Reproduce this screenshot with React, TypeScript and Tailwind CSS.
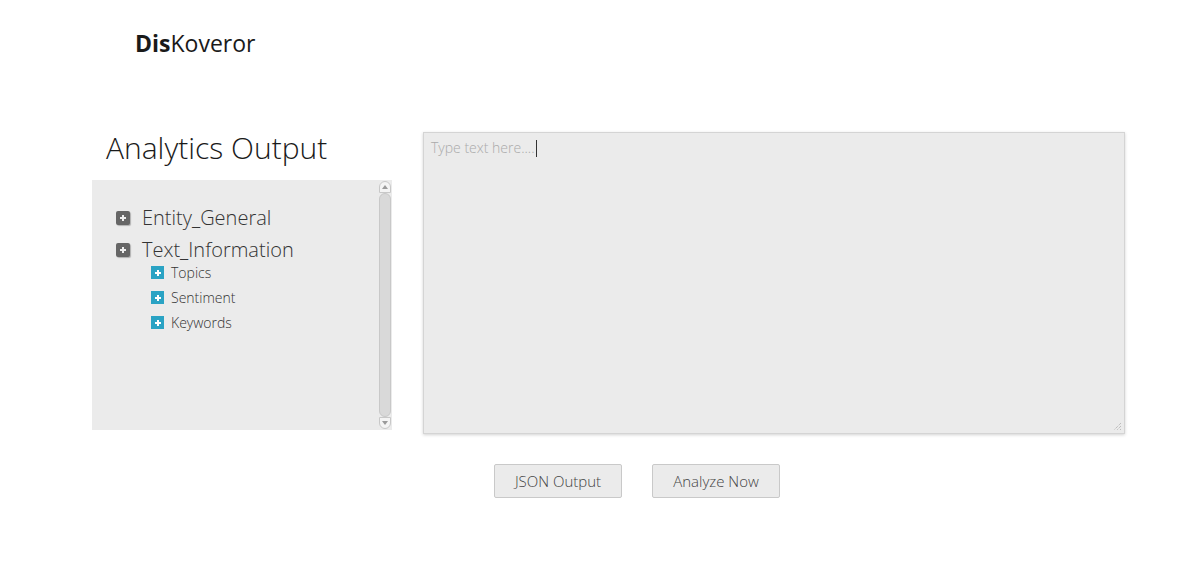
import React from 'react';

const font = { fontFamily: '"Open Sans", "Liberation Sans", sans-serif' };

function GrayPlus() {
  return (
    <span className="flex h-[14px] w-[14px] items-center justify-center rounded-[2px] bg-[#666] shadow-[1px_1px_1px_rgba(0,0,0,0.25)]">
      <svg width="8" height="8" viewBox="0 0 8 8">
        <path d="M4 1v6M1 4h6" stroke="#eee" strokeWidth="2" />
      </svg>
    </span>
  );
}

function TealPlus() {
  return (
    <span className="flex h-[13px] w-[13px] items-center justify-center bg-[#2aa3c4]">
      <svg width="8" height="8" viewBox="0 0 8 8">
        <path d="M4 1v6M1 4h6" stroke="#fff" strokeWidth="2" />
      </svg>
    </span>
  );
}

function Scrollbar() {
  return (
    <div className="mr-[1px] flex w-[13px] flex-col items-center py-[1px]">
      <div className="flex h-[12px] w-[12px] items-center justify-center rounded-t-full border border-[#c8c8c8] bg-[#f4f4f4]">
        <svg width="6" height="4" viewBox="0 0 6 4"><path d="M0 4L3 0L6 4Z" fill="#9a9a9a" /></svg>
      </div>
      <div className="w-[12px] flex-1 rounded-[6px] border border-[#c8c8c8] bg-[#d9d9d9]" />
      <div className="flex h-[12px] w-[12px] items-center justify-center rounded-b-full border border-[#c8c8c8] bg-[#f4f4f4]">
        <svg width="6" height="4" viewBox="0 0 6 4"><path d="M0 0L3 4L6 0Z" fill="#9a9a9a" /></svg>
      </div>
    </div>
  );
}

export default function App() {
  const children = ['Topics', 'Sentiment', 'Keywords'];
  return (
    <div className="min-h-[571px] w-[1190px] bg-white text-[#222]" style={font}>
      <header className="pl-[135px] pt-[29px]">
        <div className="text-[23px] leading-[28px] text-[#1a1a1a]">
          <span className="font-bold">Dis</span>
          <span className="font-normal">Koveror</span>
        </div>
      </header>

      <div className="mt-[75px] flex pl-[92px]">
        <div className="flex w-[300px] flex-col">
          <h1 className="pl-[14px] text-[30px] font-light leading-[32px] text-[#1a1a1a]">
            Analytics Output
          </h1>
          <div className="mt-[16px] flex h-[250px] bg-[#ebebeb]">
            <div className="flex-1 pl-[24px] pt-[25px]">
              <div className="flex h-[26px] items-center gap-[12px]">
                <GrayPlus />
                <span className="text-[20px] font-light text-[#333]">Entity_General</span>
              </div>
              <div className="mt-[6px] flex h-[26px] items-center gap-[12px]">
                <GrayPlus />
                <span className="text-[20px] font-light text-[#333]">Text_Information</span>
              </div>
              <div className="-mt-[3px] pl-[35px]">
                {children.map(c => (
                  <div key={c} className="flex h-[25px] items-center gap-[7px]">
                    <TealPlus />
                    <span className="text-[14px] font-light text-[#333]">{c}</span>
                  </div>
                ))}
              </div>
            </div>
            <Scrollbar />
          </div>
        </div>

        <div className="ml-[31px] flex flex-col items-start">
          <div className="flex h-[302px] w-[702px] flex-col border border-[#d4d4d4] bg-[#ebebeb] shadow-[0_1px_3px_rgba(0,0,0,0.18)]">
            <div className="flex-1 pl-[7px] pt-[2px]">
              <span className="text-[14px] font-light text-[#aaa]">Type text here....</span>
              <span className="ml-[1px] inline-block h-[17px] w-[1px] bg-[#333] align-middle" />
            </div>
            <div className="flex justify-end pb-[2px] pr-[2px]">
              <svg width="9" height="9" viewBox="0 0 9 9">
                <path d="M8 1L1 8M8 4L4 8M8 7L7 8" stroke="#aaa" strokeWidth="1" strokeDasharray="1 1" />
              </svg>
            </div>
          </div>
          <div className="ml-[71px] mt-[30px] flex gap-[30px]">
            <button className="h-[34px] w-[128px] rounded-[2px] border border-[#c9c9c9] bg-[#ebebeb] text-[15px] font-light text-[#444]">
              JSON Output
            </button>
            <button className="h-[34px] w-[128px] rounded-[2px] border border-[#c9c9c9] bg-[#ebebeb] text-[15px] font-light text-[#444]">
              Analyze Now
            </button>
          </div>
        </div>
      </div>
    </div>
  );
}
